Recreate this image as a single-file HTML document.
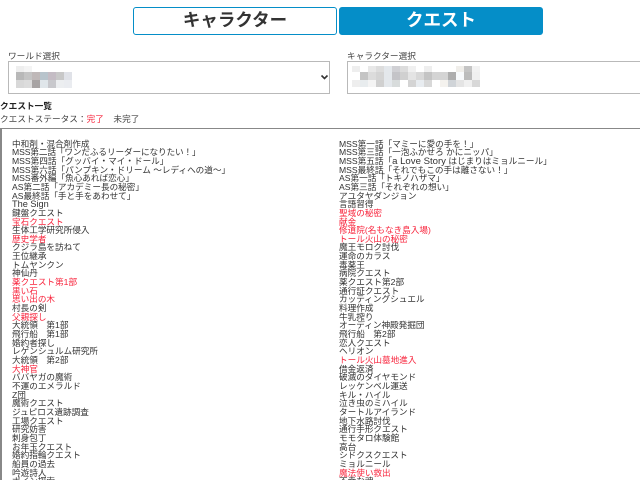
<!DOCTYPE html>
<html lang="ja"><head><meta charset="utf-8"><title>クエスト</title>
<style>
html,body{margin:0;padding:0;background:#fff;width:640px;height:480px;overflow:hidden}
body{position:relative;font-family:"Liberation Sans","Noto Sans CJK JP",sans-serif;color:#333}
.a{position:absolute;white-space:nowrap}
.btn{box-sizing:border-box;top:7px;height:28px;border:1px solid #058ec8;border-radius:3px;font-weight:bold;font-size:17.5px;line-height:25px;text-align:center}
.lb{font-size:8.67px;line-height:10px;color:#444}
.sel{box-sizing:border-box;top:61px;height:33px;border:1px solid #b9b9b9;background:#fff}
.box{left:0;top:128px;width:642px;height:360px;box-sizing:border-box;border:2px solid #888;border-width:1.5px 2px;overflow:hidden}
.col{position:absolute;top:10.6px;font-size:8.62px;line-height:8.66px;color:#333;white-space:nowrap;filter:blur(.2px)}
.col div{height:8.66px}
.r{color:#f8243c}
</style></head><body>
<div class="a btn" style="left:133px;width:204px;background:#fff;color:#333">キャラクター</div>
<div class="a btn" style="left:339px;width:204px;background:#058ec8;color:#fff">クエスト</div>

<div class="a lb" style="left:8px;top:51px">ワールド選択</div>
<div class="a sel" style="left:8px;width:322px"></div>
<svg class="a" style="left:320px;top:74px" width="9" height="7" viewBox="0 0 9 7"><path d="M1.5 1.5L4.5 4.5L7.5 1.5" fill="none" stroke="#333" stroke-width="1.6"/></svg>
<svg class="a" style="left:16px;top:66px" width="56" height="22" shape-rendering="crispEdges">
<rect x="0" y="0" width="8" height="6" fill="#eee"/><rect x="8" y="0" width="8" height="6" fill="#f4f4f4"/>
<rect x="0" y="6" width="8" height="8" fill="#b8b8b8"/><rect x="8" y="6" width="8" height="8" fill="#c4c4c4"/><rect x="16" y="6" width="8" height="8" fill="#bfb8b8"/><rect x="24" y="6" width="8" height="8" fill="#b8c4cc"/><rect x="32" y="6" width="8" height="8" fill="#c4bcc4"/><rect x="40" y="6" width="8" height="8" fill="#c8c8c8"/><rect x="48" y="6" width="8" height="8" fill="#e0e2e8"/>
<rect x="0" y="14" width="8" height="8" fill="#d8d8d8"/><rect x="8" y="14" width="8" height="8" fill="#dcdcdc"/><rect x="16" y="14" width="8" height="8" fill="#a8a4a4"/><rect x="24" y="14" width="8" height="8" fill="#e0e6ea"/><rect x="32" y="14" width="8" height="8" fill="#c8c8cc"/><rect x="40" y="14" width="8" height="8" fill="#eceef0"/><rect x="48" y="14" width="8" height="8" fill="#eaecf0"/>
</svg>

<div class="a lb" style="left:347px;top:51px">キャラクター選択</div>
<div class="a sel" style="left:347px;width:300px"></div>
<svg class="a" style="left:352px;top:66px" width="136" height="22" shape-rendering="crispEdges">
<rect x="0" y="0" width="8" height="6" fill="#eee"/><rect x="16" y="0" width="8" height="6" fill="#e8e8e8"/><rect x="24" y="0" width="8" height="6" fill="#ddd"/><rect x="32" y="0" width="8" height="6" fill="#e4e8ec"/><rect x="40" y="0" width="8" height="6" fill="#d0d0d4"/><rect x="48" y="0" width="8" height="6" fill="#dcdcdc"/><rect x="56" y="0" width="8" height="6" fill="#f0f0f0"/><rect x="72" y="0" width="8" height="6" fill="#eee"/><rect x="104" y="0" width="8" height="6" fill="#f0eeea"/><rect x="112" y="0" width="8" height="6" fill="#c4c4c4"/><rect x="120" y="0" width="8" height="6" fill="#f2f2f2"/>
<rect x="8" y="6" width="8" height="8" fill="#c4c4c4"/><rect x="16" y="6" width="8" height="8" fill="#dcdcdc"/><rect x="24" y="6" width="8" height="8" fill="#d4d4d4"/><rect x="32" y="6" width="8" height="8" fill="#e4e8ec"/><rect x="40" y="6" width="8" height="8" fill="#c4c4c8"/><rect x="48" y="6" width="8" height="8" fill="#d0d0d0"/><rect x="56" y="6" width="8" height="8" fill="#e4e4e4"/><rect x="64" y="6" width="8" height="8" fill="#d8d8d8"/><rect x="72" y="6" width="8" height="8" fill="#c4c4c4"/><rect x="80" y="6" width="8" height="8" fill="#d4d4d4"/><rect x="88" y="6" width="8" height="8" fill="#d4d4d4"/><rect x="96" y="6" width="8" height="8" fill="#aeaeae"/><rect x="104" y="6" width="8" height="8" fill="#f8fafc"/><rect x="112" y="6" width="8" height="8" fill="#bcbcbc"/><rect x="120" y="6" width="8" height="8" fill="#f0f0f0"/>
<rect x="0" y="14" width="8" height="7" fill="#eee"/><rect x="8" y="14" width="8" height="7" fill="#e8ecee"/><rect x="16" y="14" width="8" height="7" fill="#f4f4f4"/><rect x="24" y="14" width="8" height="7" fill="#d0d0d0"/><rect x="32" y="14" width="8" height="7" fill="#e4e8ec"/><rect x="40" y="14" width="8" height="7" fill="#d8dcdc"/><rect x="56" y="14" width="8" height="7" fill="#d4d4d4"/><rect x="64" y="14" width="8" height="7" fill="#e8ecf0"/><rect x="72" y="14" width="8" height="7" fill="#d8d8d8"/><rect x="88" y="14" width="8" height="7" fill="#f4f2ee"/><rect x="96" y="14" width="8" height="7" fill="#d0d4d8"/><rect x="104" y="14" width="8" height="7" fill="#e4e4e4"/><rect x="112" y="14" width="8" height="7" fill="#f0f0f0"/><rect x="120" y="14" width="8" height="7" fill="#d8d8d8"/>
</svg>

<div class="a" style="left:0;top:101px;font-size:8.67px;line-height:10px;font-weight:bold;color:#222">クエスト一覧</div>
<div class="a" style="left:0;top:114px;font-size:8.67px;line-height:10px;color:#444">クエストステータス：<span class="r">完了</span><span style="margin-left:9.5px">未完了</span></div>

<div class="a box">
<div class="col" style="left:10px">
<div>中和剤・混合剤作成</div>
<div style="letter-spacing:-.1px">MSS第二話「ワンだふるリーダーになりたい！」</div>
<div>MSS第四話「グッバイ・マイ・ドール」</div>
<div>MSS第六話「パンプキン・ドリーム ～レディへの道～」</div>
<div>MSS番外編「魚心あれば恋心」</div>
<div>AS第二話「アカデミー長の秘密」</div>
<div>AS最終話「手と手をあわせて」</div>
<div style="font-size:9.2px">The Sign</div>
<div>鍵盤クエスト</div>
<div class="r">宝石クエスト</div>
<div>生体工学研究所侵入</div>
<div class="r">歴史学者</div>
<div>クジラ島を訪ねて</div>
<div>王位継承</div>
<div>トムヤンクン</div>
<div>神仙丹</div>
<div class="r">薬クエスト第1部</div>
<div class="r">黒い石</div>
<div class="r">思い出の木</div>
<div>村長の剣</div>
<div class="r">父親探し</div>
<div>大統領　第1部</div>
<div>飛行船　第1部</div>
<div>婚約者探し</div>
<div>レゲンシュルム研究所</div>
<div>大統領　第2部</div>
<div class="r">大神官</div>
<div>ババヤガの魔術</div>
<div>不運のエメラルド</div>
<div>Z団</div>
<div>魔術クエスト</div>
<div>ジュピロス遺跡調査</div>
<div>工場クエスト</div>
<div>研究妨害</div>
<div>刺身包丁</div>
<div>お年玉クエスト</div>
<div>婚約指輪クエスト</div>
<div>船員の過去</div>
<div>吟遊詩人</div>
<div>ポイン探索</div>
</div>
<div class="col" style="left:337px">
<div>MSS第一話「マミーに愛の手を！」</div>
<div>MSS第三話「一泡ふかせろ かにニッパ」</div>
<div>MSS第五話「<span style="font-size:9.6px">a Love Story</span> はじまりはミョルニール」</div>
<div>MSS最終話「それでもこの手は離さない！」</div>
<div>AS第一話「トキノハザマ」</div>
<div>AS第三話「それぞれの想い」</div>
<div>アユタヤダンジョン</div>
<div>言語習得</div>
<div class="r">聖域の秘密</div>
<div class="r">献金</div>
<div class="r">修道院(名もなき島入場)</div>
<div class="r">トール火山の秘密</div>
<div>魔王モロク討伐</div>
<div>運命のカラス</div>
<div>毒薬王</div>
<div>病院クエスト</div>
<div>薬クエスト第2部</div>
<div>通行証クエスト</div>
<div>カッティングシュエル</div>
<div>料理作成</div>
<div>牛乳搾り</div>
<div>オーディン神殿発掘団</div>
<div>飛行船　第2部</div>
<div>恋人クエスト</div>
<div>ヘリオン</div>
<div class="r">トール火山墓地進入</div>
<div>借金返済</div>
<div>破滅のダイヤモンド</div>
<div>レッケンベル運送</div>
<div>キル・ハイル</div>
<div>泣き虫のミハイル</div>
<div>タートルアイランド</div>
<div>地下水路討伐</div>
<div>通行手形クエスト</div>
<div>モモタロ体験館</div>
<div>高台</div>
<div>シドクスクエスト</div>
<div>ミョルニール</div>
<div class="r">魔法使い救出</div>
<div>不幸な魂</div>
</div>
</div>
</body></html>
